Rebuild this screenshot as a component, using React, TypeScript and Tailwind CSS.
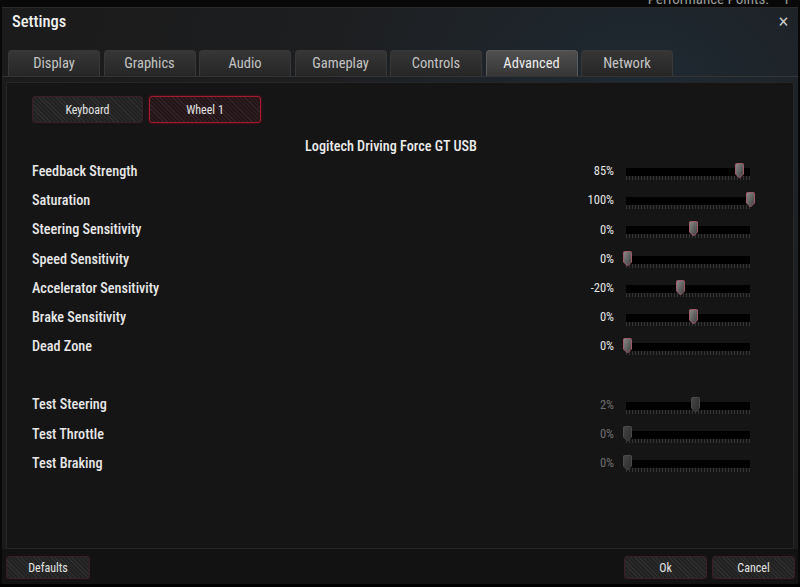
import React from 'react';

const FONT = "font-['Roboto_Condensed','Liberation_Sans_Narrow','DejaVu_Sans_Condensed',Roboto,sans-serif]";

const tabs = ['Display', 'Graphics', 'Audio', 'Gameplay', 'Controls', 'Advanced', 'Network'];

type Row = { label: string; value: string; pos: number; test?: boolean };

const mainRows: Row[] = [
  { label: 'Feedback Strength', value: '85%', pos: 113 },
  { label: 'Saturation', value: '100%', pos: 124 },
  { label: 'Steering Sensitivity', value: '0%', pos: 67 },
  { label: 'Speed Sensitivity', value: '0%', pos: 1 },
  { label: 'Accelerator Sensitivity', value: '-20%', pos: 54 },
  { label: 'Brake Sensitivity', value: '0%', pos: 67 },
  { label: 'Dead Zone', value: '0%', pos: 1 },
];

const testRows: Row[] = [
  { label: 'Test Steering', value: '2%', pos: 69, test: true },
  { label: 'Test Throttle', value: '0%', pos: 1, test: true },
  { label: 'Test Braking', value: '0%', pos: 1, test: true },
];

function Thumb({ test }: { test?: boolean }) {
  return (
    <svg width="11" height="16" viewBox="0 0 11 16">
      <defs>
        <linearGradient id={test ? 'thumbOff' : 'thumbOn'} x1="0" y1="0" x2="1" y2="1">
          <stop offset="0" stopColor={test ? '#454545' : '#8a8a8a'} />
          <stop offset="1" stopColor={test ? '#2c2c2c' : '#3c3c3c'} />
        </linearGradient>
      </defs>
      <path
        d="M1.5 1.5 Q1.5 0.5 2.5 0.5 H8.5 Q9.5 0.5 9.5 1.5 V11 L5.5 15 L1.5 11 Z"
        fill={`url(#${test ? 'thumbOff' : 'thumbOn'})`}
        stroke={test ? '#4a4a4a' : '#a05a68'}
        strokeWidth="1"
      />
    </svg>
  );
}

function Slider({ pos, test }: { pos: number; test?: boolean }) {
  return (
    <div className="relative w-[124px] h-[17px]">
      <div className="absolute left-0 right-0 top-[5px] h-[8px] bg-black" />
      <div className="absolute left-0 right-0 top-[13px] h-[4px] bg-[repeating-linear-gradient(90deg,#353535_0_1px,transparent_1px_3px)]" />
      <div className="absolute top-0" style={{ left: pos - 5 }}>
        <Thumb test={test} />
      </div>
    </div>
  );
}

function SettingRow({ row }: { row: Row }) {
  return (
    <div className="flex items-center h-[29.2px]">
      <div className="flex-1 text-[14.2px] text-[#e8e8e8] font-medium">{row.label}</div>
      <div className={`w-[70px] text-right text-[12.5px] ${row.test ? 'text-[#6e6e6e]' : 'text-[#e6e6e6]'}`}>
        {row.value}
      </div>
      <div className="ml-[12px]">
        <Slider pos={row.pos} test={row.test} />
      </div>
    </div>
  );
}

function HatchButton({ label, active, w }: { label: string; active?: boolean; w: string }) {
  return (
    <button
      className={`${w} h-full rounded-[3px] border text-[#e2e2e2] ${
        active
          ? 'border-[#a8182e] bg-[#2a1a1d] bg-[repeating-linear-gradient(45deg,#34222a_0_1px,#241517_1px_3px)] shadow-[0_0_3px_#6a1020]'
          : 'border-[#3a1f26] bg-[#272727] bg-[repeating-linear-gradient(45deg,#2e2e2e_0_1px,#222_1px_3px)]'
      }`}
    >
      {label}
    </button>
  );
}

export default function App() {
  return (
    <div className={`w-[800px] h-[587px] bg-[#080808] overflow-hidden flex flex-col ${FONT}`}>
      <div className="h-[7px] flex justify-end pr-[10px] overflow-hidden">
        <span className="text-[15px] leading-none -mt-[8px] text-[#9a9a9a]">Performance Points:&nbsp;&nbsp;&nbsp;&nbsp;1</span>
      </div>

      <div className="flex-1 mx-[2px] flex flex-col border-t border-[#2a2a2a] bg-[#1c1c1c] bg-[radial-gradient(ellipse_at_80%_15%,#1f2a33_0%,#1d1e20_35%,#1b1b1b_70%)]">
        <div className="h-[28px] flex items-center justify-between pl-[10px] pr-[9px]">
          <span className="text-[16.5px] text-[#f0f0f0] font-medium">Settings</span>
          <span className="text-[15px] text-[#cfcfcf] leading-none">✕</span>
        </div>

        <div className="mt-[14px] flex pl-[6px] gap-[3.5px] border-b border-[#333]">
          {tabs.map((t) => (
            <div
              key={t}
              className={`w-[92px] h-[26px] flex items-center justify-center rounded-t-[4px] border border-b-0 text-[14.5px] ${
                t === 'Advanced'
                  ? 'border-[#5a5a5a] bg-[linear-gradient(#505050,#363636)] text-[#ececec]'
                  : 'border-[#383838] bg-[linear-gradient(#363636,#262626)] text-[#c4c4c4]'
              }`}
            >
              {t}
            </div>
          ))}
        </div>

        <div className="mx-[4px] mt-[5px] h-[467px] bg-[#151515] border border-[#262626] flex flex-col pl-[25px] pr-[43px]">
          <div className="mt-[13px] h-[27px] flex gap-[6px] text-[12px]">
            <HatchButton label="Keyboard" w="w-[111px]" />
            <HatchButton label="Wheel 1" w="w-[112px]" active />
          </div>

          <div className="mt-[14px] h-[20px] flex items-center justify-center text-[14.2px] text-[#ececec] font-medium">
            Logitech Driving Force GT USB
          </div>

          <div className="flex flex-col">
            {mainRows.map((r) => (
              <SettingRow key={r.label} row={r} />
            ))}
            <div className="h-[29.2px]" />
            {testRows.map((r) => (
              <SettingRow key={r.label} row={r} />
            ))}
          </div>
        </div>

        <div className="flex-1 flex items-start justify-between pt-[7px] pl-[4px] pr-[3px] bg-[#121212] text-[12px] text-[#e0e0e0]">
          <HatchButton label="Defaults" w="w-[84px] !h-[23px]" />
          <div className="flex gap-[5px]">
            <HatchButton label="Ok" w="w-[83px] !h-[23px]" />
            <HatchButton label="Cancel" w="w-[83px] !h-[23px]" />
          </div>
        </div>
      </div>
      <div className="h-[3px] bg-black" />
    </div>
  );
}
